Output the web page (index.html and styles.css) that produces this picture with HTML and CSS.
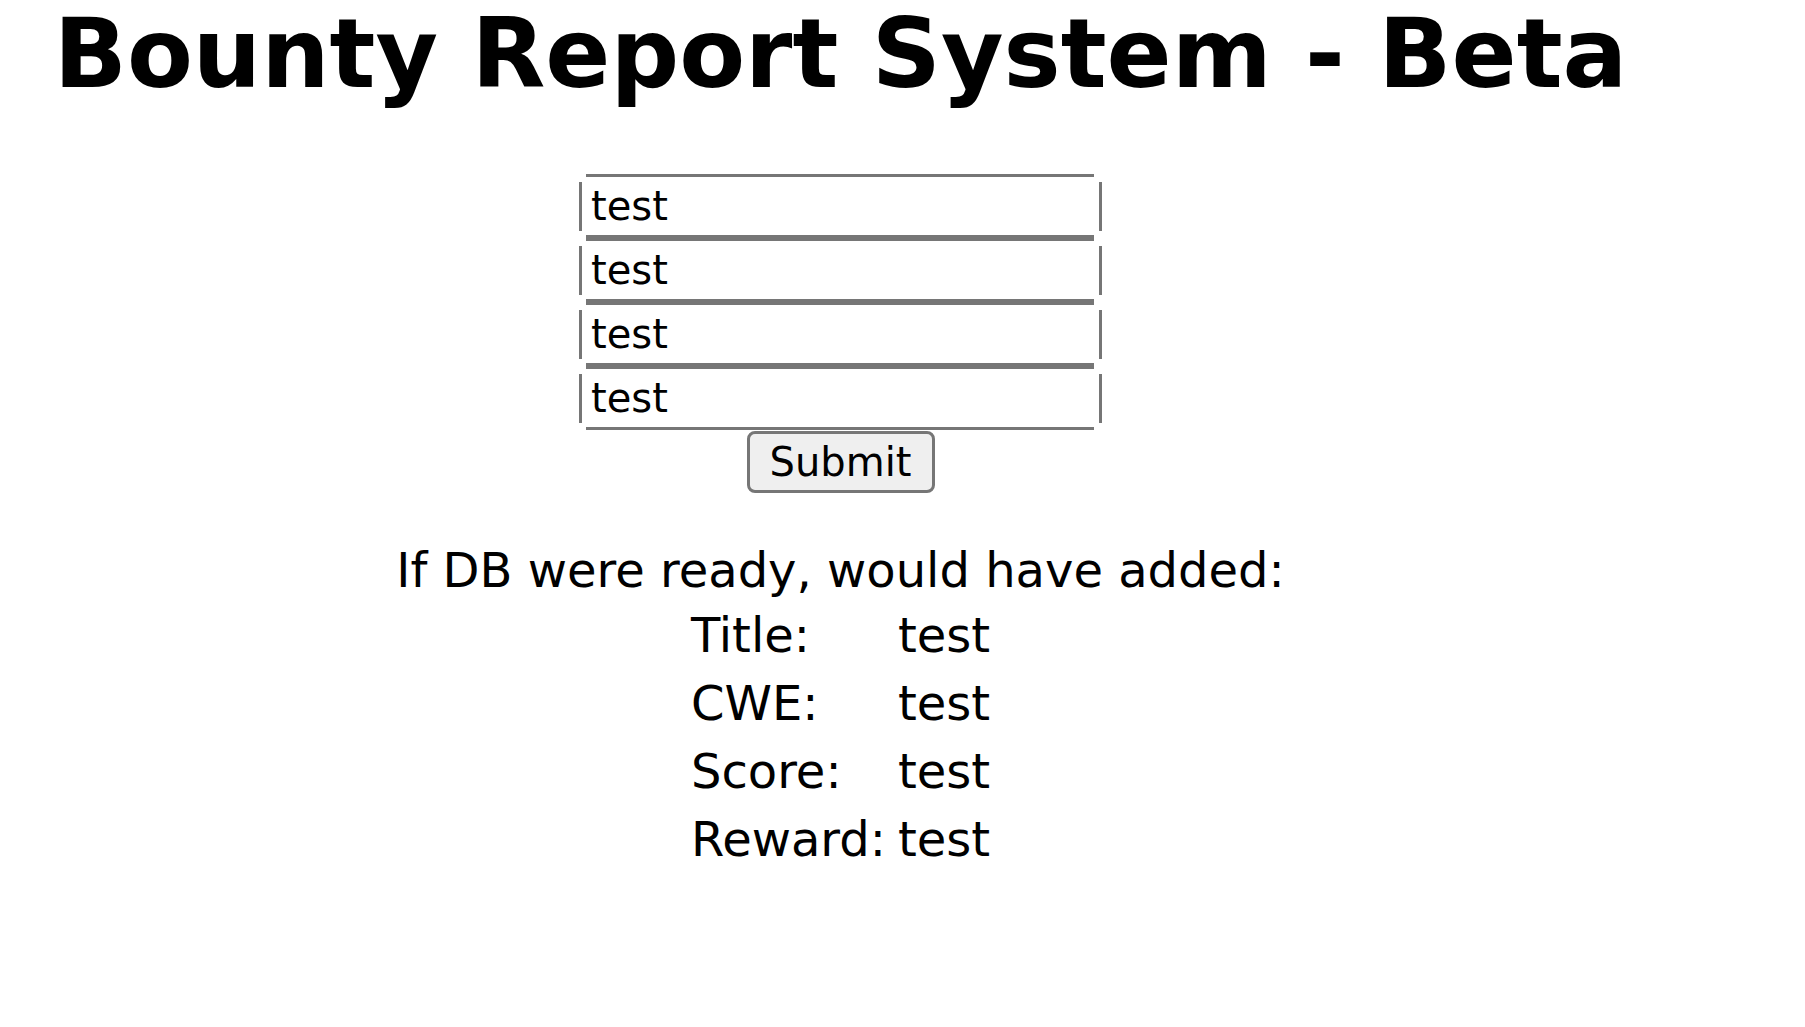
FILE: index.html
```html
<!DOCTYPE html>
<html lang="en">
<head>
<meta charset="utf-8">
<title>Bounty Report System - Beta</title>
<link rel="stylesheet" href="styles.css">
</head>
<body>
<div class="page">
  <h1 class="title">Bounty Report System - Beta</h1>
  <form class="report-form">
    <div class="field"><input class="field-input" type="text" value="test"></div>
    <div class="field"><input class="field-input" type="text" value="test"></div>
    <div class="field"><input class="field-input" type="text" value="test"></div>
    <div class="field"><input class="field-input" type="text" value="test"></div>
    <button class="submit" type="button">Submit</button>
  </form>
  <div class="result">
    <div class="result-intro">If DB were ready, would have added:</div>
    <table class="result-table">
      <tr><td>Title:</td><td>test</td></tr>
      <tr><td>CWE:</td><td>test</td></tr>
      <tr><td>Score:</td><td>test</td></tr>
      <tr><td>Reward:</td><td>test</td></tr>
    </table>
  </div>
</div>
</body>
</html>
```

FILE: styles.css
```css
html, body {
  margin: 0;
  padding: 0;
  background: #ffffff;
}

body {
  font-family: "DejaVu Sans", sans-serif;
  color: #000000;
}

.page {
  width: 1681px;
  padding-top: 1px;
  text-align: center;
}

.title {
  margin: 0;
  font-size: 96px;
  font-weight: 700;
  line-height: 106px;
  white-space: nowrap;
}

.report-form {
  margin: 67px 0 0;
  display: flex;
  flex-direction: column;
  align-items: center;
}

.field {
  display: flex;
  align-items: center;
  width: 523px;
  height: 64px;
}

.field::before,
.field::after {
  content: "";
  flex: none;
  width: 3px;
  height: 49px;
  background: #767676;
}

.field::before {
  margin-right: 4px;
}

.field::after {
  margin-left: 5px;
}

.field-input {
  flex: 1;
  min-width: 0;
  height: 64px;
  box-sizing: border-box;
  margin: 0;
  padding: 0 5px;
  border: 0;
  border-top: 3px solid #767676;
  border-bottom: 3px solid #767676;
  background: #ffffff;
  color: #000000;
  font-family: "DejaVu Sans", sans-serif;
  font-size: 40px;
  outline: none;
}

.submit {
  margin-top: 1px;
  width: 188px;
  height: 62px;
  box-sizing: border-box;
  padding: 0;
  border: 3px solid #767676;
  border-radius: 8px;
  background: #efefef;
  color: #000000;
  font-family: "DejaVu Sans", sans-serif;
  font-size: 40px;
}

.result {
  margin-top: 49px;
  font-size: 48px;
}

.result-intro {
  line-height: normal;
}

.result-table {
  margin: 0 auto;
  border-spacing: 6px;
  text-align: left;
  font-size: 48px;
}

.result-table td {
  padding: 3px;
  line-height: normal;
}
```
